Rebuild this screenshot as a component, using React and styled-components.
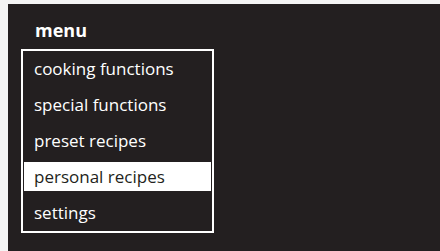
import React from 'react';
import styled, { createGlobalStyle } from 'styled-components';

const GlobalStyle = createGlobalStyle`
  html, body {
    margin: 0;
    padding: 0;
    background-color: #f4f4f4;
  }
  body {
    font-family: 'Open Sans', 'Liberation Sans', sans-serif;
  }
`;

const StyledScreen = styled.div`
  width: 440px;
  height: 251px;
  padding: 4px 0 0 8px;
  box-sizing: border-box;
`;

const StyledPanel = styled.section`
  width: 100%;
  height: 100%;
  background-color: #231f20;
  padding: 14px 0 0 13px;
  box-sizing: border-box;
`;

const StyledHeading = styled.h1`
  margin: 0 0 7px;
  padding-left: 14px;
  font-size: 18px;
  line-height: 24px;
  font-weight: 700;
  color: #fff;
`;

const StyledList = styled.ul`
  width: 193px;
  margin: 0;
  padding: 0 1px;
  list-style: none;
  border: 2px solid #fff;
  box-sizing: border-box;
`;

const StyledItem = styled.li`
  height: 36px;
  padding: 3px 0 4px;
  box-sizing: border-box;
  text-indent: 10px;
  font-size: 17px;
  line-height: 29px;
  white-space: nowrap;
  color: ${({ $active }) => ($active ? '#231f20' : '#fff')};
  background-color: ${({ $active }) => ($active ? '#fff' : 'transparent')};
  background-clip: content-box;
`;

const items = ['cooking functions', 'special functions', 'preset recipes', 'personal recipes', 'settings'];

const App = () => {
  return (
    <>
      <GlobalStyle />
      <StyledScreen>
        <StyledPanel>
          <StyledHeading>menu</StyledHeading>
          <StyledList>
            {items.map((item) => (
              <StyledItem key={item} $active={item === 'personal recipes'}>
                {item}
              </StyledItem>
            ))}
          </StyledList>
        </StyledPanel>
      </StyledScreen>
    </>
  );
};

export default App;
